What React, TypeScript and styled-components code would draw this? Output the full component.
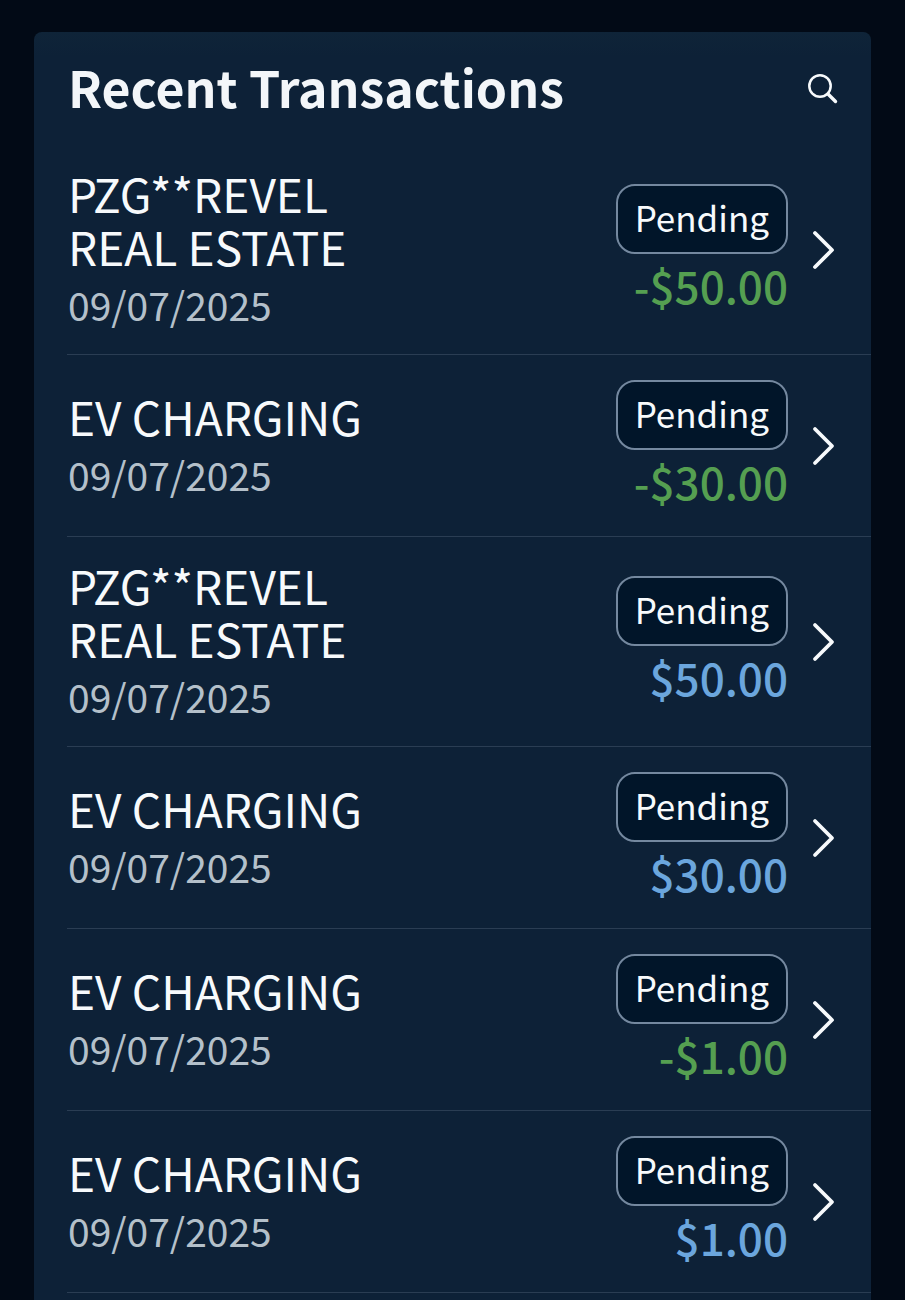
import React from "react";
import styled, { createGlobalStyle } from "styled-components";

const GlobalStyle = createGlobalStyle`
  *, *::before, *::after { box-sizing: border-box; }
  body {
    margin: 0;
    background: #020a16;
    font-family: "Noto Sans CJK SC", "Noto Sans", sans-serif;
    color: #f7fafc;
  }
`;

const Page = styled.main`
  padding: 32px 34px 0 34px;
  height: 100vh;
  overflow: hidden;
`;

const Panel = styled.section`
  min-height: 100%;
  padding-left: 33px;
  border-radius: 8px 8px 0 0;
  background: linear-gradient(#0f2438, #0d2137 24px);
`;

const Header = styled.header`
  display: flex;
  align-items: center;
  justify-content: space-between;
  height: 113px;
  padding: 0 32px 0 1px;
`;

const Title = styled.h1`
  margin: 0;
  padding-bottom: 5px;
  font-size: 50px;
  line-height: 60px;
  font-weight: 700;
  color: #f3f6f9;
`;

const SearchButton = styled.button`
  display: flex;
  padding: 0;
  border: 0;
  background: none;
  color: #f7fafc;
  cursor: pointer;
`;

const List = styled.ul`
  margin: 0;
  padding: 0;
  list-style: none;
`;

const Row = styled.li`
  border-bottom: 1px solid #2a3d53;
`;

const RowLink = styled.a`
  display: flex;
  align-items: center;
  padding: 22px 36px 28px 1px;
  color: inherit;
  text-decoration: none;

  svg {
    margin-top: 6px;
  }
`;

const Details = styled.div`
  flex: 1;
  display: flex;
  flex-direction: column;
  gap: 9px;
`;

const Name = styled.span`
  max-width: 320px;
  font-size: 46px;
  line-height: 53px;
`;

const PostedOn = styled.time`
  font-size: 39px;
  line-height: 44px;
  color: #b4c0ca;
`;

const Summary = styled.div`
  display: flex;
  flex-direction: column;
  align-items: flex-end;
  gap: 5px;
  padding-top: 3px;
  margin-right: 24px;
`;

const Status = styled.span`
  padding: 0 17px 4px;
  border: 2px solid #74889f;
  border-radius: 19px;
  background: #011529;
  font-size: 35px;
  line-height: 62px;
`;

const Amount = styled.span<{ $credit: boolean }>`
  font-size: 44px;
  line-height: 53px;
  font-weight: 500;
  color: ${(p) => (p.$credit ? "#559f51" : "#6ba6dd")};
`;

const SearchIcon = () => (
  <svg width="32" height="32" viewBox="0 0 32 32" fill="none" stroke="currentColor" strokeWidth="2.5" strokeLinecap="round" aria-hidden="true">
    <circle cx="13" cy="13" r="10.7" />
    <path d="M21 21l7.500 7.500" strokeWidth="3.4" />
  </svg>
);

const Chevron = () => (
  <svg width="23" height="40" viewBox="0 0 23 40" fill="none" stroke="currentColor" strokeWidth="3.8" strokeLinecap="round" strokeLinejoin="round" aria-hidden="true">
    <path d="M3 3l17 17L3 37" />
  </svg>
);

const transactions = [
  { name: "PZG**REVEL REAL ESTATE", amount: "-$50.00" },
  { name: "EV CHARGING", amount: "-$30.00" },
  { name: "PZG**REVEL REAL ESTATE", amount: "$50.00" },
  { name: "EV CHARGING", amount: "$30.00" },
  { name: "EV CHARGING", amount: "-$1.00" },
  { name: "EV CHARGING", amount: "$1.00" },
];

export default function App() {
  return (
    <>
      <GlobalStyle />
      <Page>
        <Panel>
          <Header>
            <Title>Recent Transactions</Title>
            <SearchButton type="button" aria-label="Search transactions">
              <SearchIcon />
            </SearchButton>
          </Header>
          <List>
            {transactions.map((t, i) => (
              <Row key={i}>
                <RowLink href="#">
                  <Details>
                    <Name>{t.name}</Name>
                    <PostedOn dateTime="2025-09-07">09/07/2025</PostedOn>
                  </Details>
                  <Summary>
                    <Status>Pending</Status>
                    <Amount $credit={t.amount.startsWith("-")}>{t.amount}</Amount>
                  </Summary>
                  <Chevron />
                </RowLink>
              </Row>
            ))}
          </List>
        </Panel>
      </Page>
    </>
  );
}
